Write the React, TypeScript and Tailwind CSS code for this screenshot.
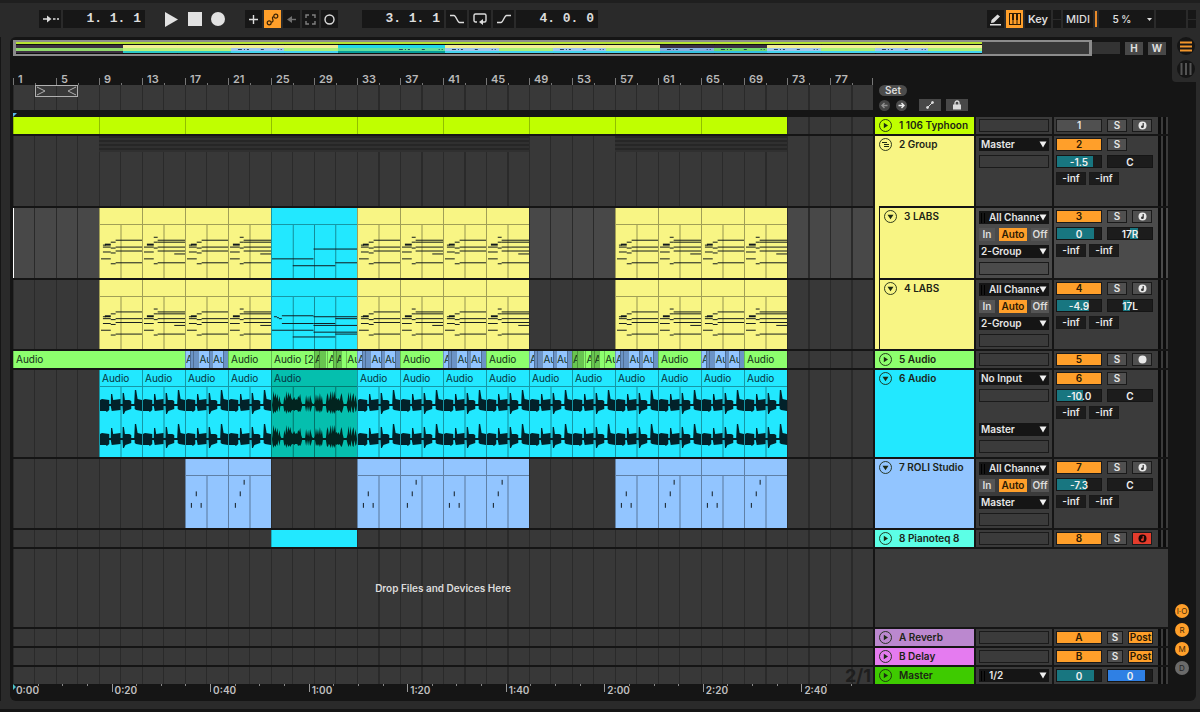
import React from 'react';
import clsx from 'clsx';

const TOTAL_BARS = 80;

type Note = [number, number, number, number?];

interface Clip {
  bars: number;
  color?: string;
  label?: string;
  kind?: 'plain' | 'midi' | 'wave' | 'burst' | 'name';
  notes?: Note[];
}

interface Track {
  name: string;
  num: string;
  height: string;
  color: string;
  lane?: string;
  panel?: string;
  clips: Clip[];
  icon: 'play' | 'fold' | 'group';
  child?: boolean;
  io: string[];
  active: boolean;
  arm?: 'midi' | 'audio' | 'armed';
  volume?: [string, number];
  pan?: [string, number, number];
  post?: boolean;
  master?: boolean;
}

// x, y, width, optional stroke height
const PHRASE_A: Note[] = [
  [5, 19, 6, 2], [3, 20, 3], [11, 17, 5], [16, 15, 27], [3, 22, 8], [11, 23, 5], [16, 22, 27], [3, 27, 8],
  [11, 28, 5], [16, 26, 27], [1, 34, 10], [11, 39, 5], [16, 38, 27],
];
const PHRASE_B: Note[] = [
  [4, 19, 7, 2], [11, 12, 4], [11, 17, 4], [15, 15, 28], [15, 17, 28], [1, 22, 10], [11, 23, 4], [15, 22, 28],
  [1, 27, 10], [15, 26, 28], [32, 29, 11], [1, 34, 10], [11, 39, 4], [15, 38, 28],
];
const BREAK_3: Note[] = [[0, 34, 42], [21, 41, 43], [42, 24, 44], [64, 38, 22]];
const BREAK_4: Note[] = [
  [2, 20, 3], [5, 21, 2], [7, 22, 3], [10, 19, 32], [42, 20, 44], [64, 22, 22], [10, 27, 32], [42, 27, 22],
  [42, 29, 44], [0, 34, 42], [42, 36, 44], [64, 38, 22], [21, 41, 43],
];
const HITS_A: Note[] = [[5, 28, 1, 5], [10, 16, 1, 5], [15, 28, 1, 5]];
const HITS_B: Note[] = [[6, 28, 1, 5], [11, 16, 1, 5], [15, 4, 1, 5]];

const YELLOW = 'bg-[#f8f584]';
const CYAN = 'bg-[#22e8ff]';
const GREEN = 'bg-[#8dff6e]';
const GREEN_DARK = 'bg-[#68c550]';
const BLUE = 'bg-[#92c5ff]';
const BLUE_DARK = 'bg-[#6b93c6]';

const gap = (bars: number): Clip => ({ bars });
const midi = (color: string, a: Note[], b: Note[]): Clip[] => [
  { bars: 4, color, kind: 'midi', notes: a },
  { bars: 4, color, kind: 'midi', notes: b },
];
const labs = (middle: Note[]): Clip[] => [
  gap(8),
  ...midi(YELLOW, PHRASE_A, PHRASE_B),
  ...midi(YELLOW, PHRASE_A, PHRASE_B),
  { bars: 8, color: CYAN, kind: 'midi', notes: middle },
  ...midi(YELLOW, PHRASE_A, PHRASE_B),
  ...midi(YELLOW, PHRASE_A, PHRASE_B),
  gap(8),
  ...midi(YELLOW, PHRASE_A, PHRASE_B),
  ...midi(YELLOW, PHRASE_A, PHRASE_B),
];

const name = (bars: number, color: string, label?: string): Clip => ({ bars, color, label, kind: 'name' });
const blueRun = [
  name(0.5, BLUE, 'A'), name(0.25, BLUE_DARK), name(0.5, BLUE_DARK), name(1, BLUE, 'Au'),
  name(0.25, BLUE_DARK), name(1, BLUE, 'Au'), name(0.5, BLUE_DARK),
];
const greenRun = [
  name(0.5, GREEN_DARK, 'A'), name(0.5, GREEN_DARK), name(0.25, GREEN), name(0.5, GREEN, 'A'),
  name(0.25, GREEN_DARK), name(0.5, GREEN_DARK, 'A'), name(0.5, GREEN), name(1, GREEN, 'Au'),
];
const green = name(4, GREEN, 'Audio');
const waves = (n: number): Clip[] =>
  Array.from({ length: n }, () => ({ bars: 4, color: CYAN, label: 'Audio', kind: 'wave' as const }));

const TRACKS: Track[] = [
  {
    name: '1 106 Typhoon', num: '1', height: 'h-[17px]', color: 'bg-[#c0ff00]', icon: 'play', io: ['empty'],
    active: false, arm: 'midi',
    clips: Array.from({ length: 9 }, () => ({ bars: 8, color: 'bg-[#c0ff00]', kind: 'plain' as const })),
  },
  {
    name: '2 Group', num: '2', height: 'h-[70px]', color: YELLOW, icon: 'group', io: ['Master', 'empty'],
    active: true, volume: ['-1.5', 82], pan: ['C', 50, 50],
    clips: [],
  },
  {
    name: '3 LABS', num: '3', height: 'h-[70px]', color: YELLOW, icon: 'fold', child: true,
    lane: 'bg-[#484848]', panel: 'bg-[#4b4b4b]', io: ['All Channels', 'monitor', '2-Group', 'empty'],
    active: true, arm: 'midi', volume: ['0', 84], pan: ['17R', 50, 69],
    clips: labs(BREAK_3),
  },
  {
    name: '4 LABS', num: '4', height: 'h-[69px]', color: YELLOW, icon: 'fold', child: true,
    io: ['All Channels', 'monitor', '2-Group', 'empty'],
    active: true, arm: 'midi', volume: ['-4.9', 72], pan: ['17L', 34, 50],
    clips: labs(BREAK_4),
  },
  {
    name: '5 Audio', num: '5', height: 'h-[17px]', color: GREEN, icon: 'play', io: ['empty'],
    active: true, arm: 'audio',
    clips: [
      name(16, GREEN, 'Audio'), ...blueRun, green, name(4, GREEN, 'Audio [2'), ...greenRun, ...blueRun, green,
      ...blueRun, green, ...blueRun, ...greenRun, ...blueRun, green, ...blueRun, green,
    ],
  },
  {
    name: '6 Audio', num: '6', height: 'h-[87px]', color: CYAN, icon: 'fold',
    io: ['No Input', 'empty', 'none', 'Master', 'empty'],
    active: true, volume: ['-10.0', 58], pan: ['C', 50, 50],
    clips: [gap(8), ...waves(4), { bars: 8, color: 'bg-[#05bfae]', label: 'Audio', kind: 'burst' }, ...waves(10)],
  },
  {
    name: '7 ROLI Studio', num: '7', height: 'h-[69px]', color: BLUE, icon: 'fold',
    io: ['All Channels', 'monitor', 'Master', 'empty'],
    active: true, arm: 'midi', volume: ['-7.3', 65], pan: ['C', 50, 50],
    clips: [
      gap(16), ...midi(BLUE, HITS_A, HITS_B), gap(8),
      ...midi(BLUE, HITS_A, HITS_B), ...midi(BLUE, HITS_A, HITS_B), gap(8),
      ...midi(BLUE, HITS_A, HITS_B), ...midi(BLUE, HITS_A, HITS_B),
    ],
  },
  {
    name: '8 Pianoteq 8', num: '8', height: 'h-[17px]', color: 'bg-[#5cffe6]', icon: 'play', io: ['empty'],
    active: true, arm: 'armed',
    clips: [gap(24), { bars: 8, color: CYAN, kind: 'plain' }],
  },
];

const RETURNS: Track[] = [
  {
    name: 'A Reverb', num: 'A', height: 'h-[17px]', color: 'bg-[#bb88cf]', icon: 'play', io: ['empty'],
    active: true, post: true, clips: [],
  },
  {
    name: 'B Delay', num: 'B', height: 'h-[17px]', color: 'bg-[#e57bf0]', icon: 'play', io: ['empty'],
    active: true, post: true, clips: [],
  },
  {
    name: 'Master', num: '', height: 'h-[17px]', color: 'bg-[#3ecb00]', icon: 'play', io: ['1/2'],
    active: true, master: true, clips: [],
  },
];

const GRID =
  'bg-[repeating-linear-gradient(to_right,#2a2a2a_0px,#2a2a2a_1px,transparent_1px,transparent_2.5%)]';

const WavePath: React.FC<{ c: number }> = ({ c }) => (
  <path
    fill="#02222a"
    d={`M0 ${c - 5}L2 ${c - 6}L9.5 ${c - 5}V${c - 1}H11L11.300 ${c - 11}H12.500L13.500 ${c - 5}L21 ${c - 6}V${c - 1}H23L23.200 ${c - 12}H24.500L25.500 ${c - 5}L30 ${c - 5}L32 ${c - 4}V${c - 1}H35L35.700 ${c - 15}H37L38.500 ${c - 6}L43 ${c - 5}V${c + 6}L37 ${c + 5}L35.500 ${c + 4}V${c + 1}H32V${c + 4}L26 ${c + 6}L24.500 ${c + 9}H23.500L23 ${c + 1}H21V${c + 5}L12 ${c + 6}L11 ${c + 1}H9.5V${c + 5}L7 ${c + 7}L6 ${c + 6}L0 ${c + 6}Z`}
  />
);

const BURST = [
  4, 14, 7, 12, 6, 11, 3, 9, 3, 1, 1, 1, 9, 4, 14, 6, 13, 8, 12, 7, 5, 6, 8, 5, 6, 5, 9, 7, 11, 4, 1, 1, 1, 1, 10, 3,
  9, 2, 10, 6, 2, 1, 1, 3, 11, 4, 10, 4, 12, 4, 9, 1, 1, 1, 1, 9, 12, 4, 8, 14, 5, 14, 7, 14, 6, 7, 5, 7, 4, 9, 12, 5,
  1, 1, 1, 1, 5, 13, 4, 13, 3, 9, 12, 3, 10, 4,
];

const burstPath = (c: number) => {
  const top = BURST.map((a, i) => `L${i + 0.5} ${c - a}`).join('');
  const bottom = BURST.map((a, i) => `L${i + 0.5} ${c + (a > 3 ? Math.round(a * 0.4) + 3 : 1)}`).reverse().join('');
  return `M0 ${c}${top}L86 ${c}${bottom}Z`;
};

const ClipBody: React.FC<{ clip: Clip }> = ({ clip }) => {
  const width = clip.bars * 10.75;
  const height = clip.kind === 'midi' ? 54 : 70;
  return (
    <svg viewBox={`0 0 ${width} ${height}`} preserveAspectRatio="none" className="block w-full h-full">
      {[2, 4, 6].filter((b) => b < clip.bars).map((b) => (
        <rect key={b} x={b * 10.75 - 0.5} y={0} width={1} height={height} fill="#000" opacity={0.4} />
      ))}
      {clip.notes?.map(([x, y, w, h = 1], i) => (
        <rect key={i} x={x} y={y} width={w} height={h} fill="#10181c" />
      ))}
      {clip.kind === 'wave' && <><WavePath c={18} /><WavePath c={52} /></>}
      {clip.kind === 'burst' && (
        <g fill="#02241f">
          <path d={burstPath(18)} />
          <path d={burstPath(52)} />
        </g>
      )}
    </svg>
  );
};

const ClipBox: React.FC<{ clip: Clip }> = ({ clip }) => {
  const style = { width: `${(clip.bars / TOTAL_BARS) * 100}%` };
  if (!clip.kind) return <div className="shrink-0" style={style} />;
  if (clip.kind === 'plain' || clip.kind === 'name') {
    return (
      <div
        style={style}
        className={clsx(
          'shrink-0 overflow-hidden whitespace-nowrap border-l border-black/25 leading-[17px] text-[#12301a]',
          clip.bars >= 4 && 'pl-0.5',
          clip.color,
        )}
      >
        {clip.label}
      </div>
    );
  }
  return (
    <div style={style} className={clsx('shrink-0 flex flex-col border-l border-black/35', clip.color)}>
      <div className="h-[17px] shrink-0 pl-0.5 leading-[17px] border-b border-black/35 text-[#063440]">
        {clip.label}
      </div>
      <div className="flex-1 min-h-0">
        <ClipBody clip={clip} />
      </div>
    </div>
  );
};

const TrackIcon: React.FC<{ kind: Track['icon'] }> = ({ kind }) => (
  <svg viewBox="0 0 13 13" className="w-[13px] h-[13px] shrink-0" fill="none" stroke="#1c2a14">
    <circle cx="6.5" cy="6.5" r="6" strokeWidth="0.9" />
    {kind === 'play' && <path d="M4.800 3.800v5.400l4.200-2.700z" fill="#1c2a14" stroke="none" />}
    {kind === 'fold' && <path d="M3.500 4.800h6l-3 4.400z" fill="#1c2a14" stroke="none" />}
    {kind === 'group' && <path d="M3 4.500h5M5 6.500h5M5 8.500h5" />}
  </svg>
);

const Select: React.FC<{ value: string; track: string }> = ({ value, track }) => {
  const wide = value === 'All Channels' || value === '1/2';
  return (
    <div className="relative h-[13px] bg-[#151515]">
      <select
        aria-label={`${track} routing`}
        className={clsx(
          'block w-full h-full appearance-none bg-transparent text-[#e6e6e6] font-semibold leading-[13px] pr-2.5',
          wide ? 'pl-2.5' : 'pl-0.5',
        )}
      >
        <option>{value}</option>
      </select>
      {wide && <span className="absolute left-0.5 top-0.5 w-1 h-2.5 border-x border-black" />}
      <svg viewBox="0 0 8 7" className="absolute right-0.5 top-[3px] w-2 h-[7px] pointer-events-none" fill="#f0f0f0">
        <path d="M0.500 0.500h7L4 6.500z" />
      </svg>
    </div>
  );
};

const IoRow: React.FC<{ item: string; track: string }> = ({ item, track }) => {
  if (item === 'empty') return <div className="h-[13px] border border-[#1a1a1a]" />;
  if (item === 'none') return <div className="h-[13px]" />;
  if (item === 'monitor') {
    return (
      <div className="flex gap-1 h-[13px] font-semibold leading-[13px]">
        <button className="w-4 bg-[#555] text-[#ddd]">In</button>
        <button className="flex-1 bg-[#ff9f2a] text-[#2b1a04]">Auto</button>
        <button className="w-[18px] bg-[#555] text-[#ddd]">Off</button>
      </div>
    );
  }
  return <Select value={item} track={track} />;
};

const ValueBox: React.FC<{ label: string; value: string; from: number; to: number; fill: string }> = ({
  label, value, from, to, fill,
}) => (
  <input
    aria-label={label}
    defaultValue={value}
    className="w-[46px] h-[13px] border border-[#151515] text-center text-[#f0f0f0] font-semibold leading-[11px]"
    style={{
      background: `linear-gradient(to right, #1c1c1c ${from}%, ${fill} ${from}%, ${fill} ${to}%, #1c1c1c ${to}%)`,
    }}
  />
);

const ArmIcon: React.FC<{ arm: NonNullable<Track['arm']> }> = ({ arm }) => (
  <svg viewBox="0 0 9 9" className="w-[9px] h-[9px]">
    <circle cx="4.5" cy="4.5" r="4" fill={arm === 'armed' ? '#1a0805' : '#e8e8e8'} />
    {arm !== 'audio' && (
      <path
        d="M4.600 2h1.200v3.800a1.400 1.200 0 1 1-1.200-1.200z"
        fill={arm === 'armed' ? '#e43c2c' : '#333'}
      />
    )}
  </svg>
);

const Mixer: React.FC<{ track: Track }> = ({ track }) => {
  const box = 'h-[13px] border border-[#1a1a1a] leading-[11px] font-semibold flex items-center justify-center';
  return (
    <div className={clsx('w-[114px] flex justify-between px-0.5', track.panel ?? 'bg-[#3b3b3b]')}>
      <div className="w-[97px] pt-0.5 flex flex-col gap-1">
        {track.master ? (
          <div className="flex gap-[5px]">
            <ValueBox label="Master volume" value="0" from={0} to={84} fill="#187680" />
            <ValueBox label="Cue volume" value="0" from={0} to={84} fill="#2f80e4" />
          </div>
        ) : (
          <div className="flex gap-[5px]">
            <button className={clsx(box, 'w-[46px]', track.active ? 'bg-[#ff9f2a] text-[#2b1a04]' : 'bg-[#505050] text-[#e6e6e6]')}>
              {track.num}
            </button>
            <button className={clsx(box, 'bg-[#505050] text-[#e6e6e6]', track.post ? 'w-4' : 'w-5')}>S</button>
            {track.post && <button className={clsx(box, 'w-[25px] bg-[#ff9f2a] text-[#2b1a04]')}>Post</button>}
            {track.arm && (
              <button
                aria-label={`Arm ${track.name}`}
                className={clsx(box, 'w-5', track.arm === 'armed' ? 'bg-[#e43c2c]' : 'bg-[#505050]')}
              >
                <ArmIcon arm={track.arm} />
              </button>
            )}
          </div>
        )}
        {track.volume && track.pan && (
          <>
            <div className="flex gap-[5px]">
              <ValueBox label={`${track.name} volume`} value={track.volume[0]} from={0} to={track.volume[1]} fill="#187680" />
              <ValueBox label={`${track.name} pan`} value={track.pan[0]} from={track.pan[1]} to={track.pan[2]} fill="#187680" />
            </div>
            <div className="flex gap-[3px]">
              <div className={clsx(box, 'w-[30px] bg-[#1c1c1c] text-[#e6e6e6]')}>-inf</div>
              <div className={clsx(box, 'w-[30px] bg-[#1c1c1c] text-[#e6e6e6]')}>-inf</div>
            </div>
          </>
        )}
      </div>
      <div className="flex gap-0.5">
        <div className="w-[3px] bg-[#0c0c0c]" />
        <div className="w-[3px] bg-[#0c0c0c]" />
      </div>
    </div>
  );
};

const TrackRow: React.FC<{ track: Track }> = ({ track }) => (
  <div className={clsx('flex gap-0.5', track.height)}>
    <div className={clsx('flex-1 min-w-0 flex', GRID, track.lane ?? 'bg-[#383838]', track.lane && 'shadow-[inset_1px_0_0_#fff]')}>
      {track.clips.map((clip, i) => (
        <ClipBox key={i} clip={clip} />
      ))}
      {track.icon === 'group' && (
        <>
          <div className="w-[10%]" />
          <div className="w-1/2 h-4 bg-[repeating-linear-gradient(to_bottom,#262626_0px,#262626_2px,#303030_2px,#303030_4px)]" />
          <div className="w-[10%]" />
          <div className="w-1/5 h-4 bg-[repeating-linear-gradient(to_bottom,#262626_0px,#262626_2px,#303030_2px,#303030_4px)]" />
        </>
      )}
      {track.master && (
        <div className="ml-auto pr-0.5 text-lg leading-[17px] font-bold text-[#1e1e1e]">2/1</div>
      )}
    </div>
    <div className="w-[99px] flex">
      {track.child && (
        <div className={clsx('w-1 mr-px shadow-[0_-2px_0_#f8f584]', track.color)} />
      )}
      <div className={clsx('flex-1 min-w-0 flex items-start gap-[7px] pl-1 pt-0.5', track.color)}>
        <TrackIcon kind={track.icon} />
        <span className="leading-[13px] font-semibold text-[#1c2416] whitespace-nowrap">{track.name}</span>
      </div>
    </div>
    <div
      className={clsx(
        'w-[76px] px-[3px] flex flex-col gap-1',
        track.io.includes('monitor') ? 'pt-[3px]' : 'pt-0.5',
        track.panel ?? 'bg-[#3b3b3b]',
      )}
    >
      {track.io.map((item, i) => (
        <IoRow key={i} item={item} track={track.name} />
      ))}
    </div>
    <Mixer track={track} />
  </div>
);

// top, middle and bottom stripe of each 4-bar block
const OVERVIEW: [string, string, string, boolean][] = [
  ['bg-[#3c3040]', 'bg-[#8fd76c]', 'bg-[#3c3040]', false],
  ['bg-[#3c3040]', 'bg-[#8fd76c]', 'bg-[#3c3040]', false],
  ['bg-[#f2ee94]', 'bg-[#b9f07c]', 'bg-[#2cc9c6]', false],
  ['bg-[#f2ee94]', 'bg-[#b9f07c]', 'bg-[#2cc9c6]', false],
  ['bg-[#f2ee94]', 'bg-[#9fc8f0]', 'bg-[#45d4f0]', true],
  ['bg-[#f2ee94]', 'bg-[#a8f07c]', 'bg-[#45d4f0]', false],
  ['bg-[#22d8e8]', 'bg-[#5fe0a0]', 'bg-[#079c98]', false],
  ['bg-[#22d8e8]', 'bg-[#5fe0a0]', 'bg-[#079c98]', true],
  ['bg-[#f2ee94]', 'bg-[#9fc8f0]', 'bg-[#45d4f0]', true],
  ['bg-[#f2ee94]', 'bg-[#a8f07c]', 'bg-[#45d4f0]', false],
  ['bg-[#f2ee94]', 'bg-[#9fc8f0]', 'bg-[#45d4f0]', true],
  ['bg-[#f2ee94]', 'bg-[#a8f07c]', 'bg-[#45d4f0]', false],
  ['bg-[#3c3040]', 'bg-[#86b0e0]', 'bg-[#35c0e0]', true],
  ['bg-[#3c3040]', 'bg-[#70d870]', 'bg-[#35c0e0]', true],
  ['bg-[#f2ee94]', 'bg-[#9fc8f0]', 'bg-[#45d4f0]', true],
  ['bg-[#f2ee94]', 'bg-[#a8f07c]', 'bg-[#45d4f0]', false],
  ['bg-[#f2ee94]', 'bg-[#9fc8f0]', 'bg-[#45d4f0]', true],
  ['bg-[#f2ee94]', 'bg-[#a8f07c]', 'bg-[#45d4f0]', false],
];

const Overview = () => (
  <div className="flex items-center gap-[5px] h-4 pr-1.5">
    <div className="flex-1 flex items-center h-4">
      <div className="w-[97.5%] h-4 flex border-2 border-x-[3px] border-[#8c8c8c] bg-[#383838]">
        <div className="w-[90%] flex bg-[#101010]">
          {OVERVIEW.map(([top, mid, bottom, busy], i) => (
            <div
              key={i}
              className={clsx('flex-1 flex flex-col', i > 1 && i !== 7 && 'shadow-[inset_1px_0_0_rgba(0,0,0,0.5)]')}
            >
              <div className="h-0.5 bg-[#b6e332]" />
              <div className="h-px" />
              <div className={clsx('h-[3px]', top)} />
              <div className={clsx('h-[3px]', mid)}>
                {busy && (
                  <svg viewBox="0 0 54 3" preserveAspectRatio="none" className="block w-full h-full" stroke="#26405c">
                    <path d="M7 1.500h4m2 0h1m2 0h2M30 1.500h3M47 1.500h1m2 0h1" />
                  </svg>
                )}
              </div>
              <div className={clsx('h-0.5', bottom)} />
            </div>
          ))}
        </div>
      </div>
      <div className="flex-1 h-3 bg-[#333]" />
    </div>
    <button className="w-[18px] h-[13px] bg-[#484848] text-[#ddd] font-bold leading-[13px]">H</button>
    <button className="w-[18px] h-[13px] bg-[#484848] text-[#ddd] font-bold leading-[13px]">W</button>
  </div>
);

const BarRuler = () => (
  <div className="flex-1 min-w-0 flex flex-col">
    <div className="h-[29px] flex items-end">
      {Array.from({ length: 20 }, (_, i) => (
        <div key={i} className="w-1/20 flex items-end">
          <div className="w-1/2 flex items-end gap-1">
            <span className="w-px h-[7px] bg-[#777] shrink-0" />
            <span className="text-[11px] text-[#b8b8b8] font-semibold leading-3">{i * 4 + 1}</span>
          </div>
          <span className="w-px h-0.5 bg-[#777]" />
          {i === 19 && <span className="ml-auto w-px h-[7px] bg-[#777]" />}
        </div>
      ))}
    </div>
    <div className={clsx('h-[25px] bg-[#393939] flex', GRID)}>
      <div className="w-[2.5%]" />
      <div className="w-[5%] h-3 flex justify-between items-center border border-[#b0b0b0]">
        <svg viewBox="0 0 10 10" className="w-2.5 h-2.5" fill="none" stroke="#b0b0b0">
          <path d="M1 1l8 4-8 4" />
        </svg>
        <svg viewBox="0 0 10 10" className="w-2.5 h-2.5" fill="none" stroke="#b0b0b0">
          <path d="M9 1L1 5l8 4" />
        </svg>
      </div>
    </div>
    <div className="h-[7px] flex items-end">
      <svg viewBox="0 0 4 4" className="w-1 h-1" fill="#58b8e8"><path d="M0 0h4L0 4z" /></svg>
    </div>
  </div>
);

const SetControls = () => (
  <div className="w-[295px] pl-1.5 pt-[29px]">
    <button className="block w-7 h-[11px] rounded-full bg-[#4c4c4c] text-[#ddd] font-semibold leading-[11px]">Set</button>
    <div className="flex items-center mt-[3px] h-3">
      <button aria-label="Previous locator" className="w-[11px] h-[11px] rounded-full bg-[#444] text-[#909090] mr-1.5">
        <svg viewBox="0 0 11 11" fill="none" stroke="currentColor" strokeWidth="1.400"><path d="M8.500 5.500H3M5.500 3L3 5.500 5.500 8" /></svg>
      </button>
      <button aria-label="Next locator" className="w-[11px] h-[11px] rounded-full bg-[#4c4c4c] text-[#eee] mr-3">
        <svg viewBox="0 0 11 11" fill="none" stroke="currentColor" strokeWidth="1.400"><path d="M2.500 5.500H8M5.500 3L8 5.500 5.500 8" /></svg>
      </button>
      <button aria-label="Automation mode" className="w-[22px] h-3 bg-[#484848] flex items-center justify-center mr-[5px]">
        <svg viewBox="0 0 10 10" className="w-2.5 h-2.5" stroke="#ddd" fill="#ddd"><path d="M3 7l4-4" /><circle cx="2.500" cy="7.500" r="1" /><circle cx="7.500" cy="2.500" r="1" /></svg>
      </button>
      <button aria-label="Lock envelopes" className="w-[22px] h-3 bg-[#484848] flex items-center justify-center">
        <svg viewBox="0 0 10 10" className="w-2.5 h-2.5" fill="#ddd"><path d="M1 4.500h8v5H1z" /><path d="M3 5V3a2 2 0 0 1 4 0v2" fill="none" stroke="#ddd" strokeWidth="1.300" /></svg>
      </button>
    </div>
  </div>
);

const TimeRuler = () => (
  <div className="flex h-[17px] pr-[299px]">
    <div className="flex-1 min-w-0 flex overflow-hidden">
      {['0:00', '0:20', '0:40', '1:00', '1:20', '1:40', '2:00', '2:20', '2:40'].map((t, i) => (
        <div key={t} className="w-[11.46%] shrink-0 flex items-start">
          <div className="w-1/4 flex gap-0.5">
            {i === 0 ? (
              <svg viewBox="0 0 3 6" className="w-[3px] h-1.5 shrink-0 -mr-0.5" fill="#4fc3c8"><path d="M0 0l3 3-3 3z" /></svg>
            ) : (
              <span className="w-px h-2 bg-[#999] shrink-0" />
            )}
            <span className="text-[#c0c0c0] font-semibold leading-[13px]">{t}</span>
          </div>
          {[1, 2, 3].map((q) => (
            <div key={q} className="w-1/4 h-0.5 border-l border-[#888]" />
          ))}
        </div>
      ))}
    </div>
  </div>
);

const Cell: React.FC<{ label: string; className?: string; children?: React.ReactNode }> = ({ label, className, children }) => (
  <button aria-label={label} className={clsx('h-[18px] bg-[#171717] text-[#ddd] flex items-center justify-center', className ?? 'w-[17px]')}>
    {children}
  </button>
);

const Position: React.FC<{ label: string; value: string }> = ({ label, value }) => (
  <input
    aria-label={label}
    defaultValue={value}
    className="w-[82px] h-[18px] pr-1 bg-[#171717] text-right text-[#ddd] text-[13px] font-bold font-['Liberation_Mono',monospace]"
  />
);

const line = { fill: 'none', stroke: 'currentColor', strokeWidth: 1.4 };

const Transport = () => (
  <header className="flex items-center h-[37px] pl-[39px] pr-1 pb-0.5 border-t-[3px] border-[#1f1f1f]">
    <div className="flex gap-0.5">
      <Cell label="Follow" className="w-[22px]">
        <svg viewBox="0 0 17 10" className="w-[17px] h-2.5" {...line}><path d="M1 5h6M11 5h2.500M15 5h2" /><path d="M5 1.500L9.500 5 5 8.500z" fill="currentColor" stroke="none" /></svg>
      </Cell>
      <Position label="Arrangement position" value="1. 1. 1" />
    </div>
    <div className="flex items-center gap-[9px] ml-[19px] text-[#e2e2e2]">
      <button aria-label="Play"><svg viewBox="0 0 15 15" className="w-[15px] h-[15px]" fill="currentColor"><path d="M1 0l13 7.500L1 15z" /></svg></button>
      <button aria-label="Stop"><svg viewBox="0 0 14 14" className="w-3.5 h-3.5" fill="currentColor"><path d="M0 0h14v14H0z" /></svg></button>
      <button aria-label="Record"><svg viewBox="0 0 14 14" className="w-3.5 h-3.5" fill="currentColor"><circle cx="7" cy="7" r="7" /></svg></button>
    </div>
    <div className="flex gap-0.5 ml-5">
      <Cell label="MIDI overdub"><svg viewBox="0 0 11 11" className="w-[11px] h-[11px]" {...line}><path d="M5.500 1v9M1 5.500h9" /></svg></Cell>
      <Cell label="Automation arm" className="w-[17px] !bg-[#ff9f2a] !text-[#3a2204]">
        <svg viewBox="0 0 13 13" className="w-[13px] h-[13px]" {...line} strokeWidth={1.2}><circle cx="3.200" cy="9.800" r="2" /><circle cx="9.800" cy="3.200" r="2" /><path d="M5.200 9.200c2 0 2-1.700 1.600-2.700S6 3.500 7.800 3.800" /></svg>
      </Cell>
      <Cell label="Re-enable automation"><svg viewBox="0 0 11 11" className="w-[11px] h-[11px] text-[#707070]" {...line}><path d="M4 5.500h6" /><path d="M6 2L1 5.500 6 9z" fill="currentColor" stroke="none" /></svg></Cell>
      <Cell label="Capture MIDI"><svg viewBox="0 0 11 11" className="w-[11px] h-[11px] text-[#808080]" {...line}><path d="M1 4V1h3M7 1h3v3M10 7v3H7M4 10H1V7" /></svg></Cell>
      <Cell label="Session record"><svg viewBox="0 0 11 11" className="w-[11px] h-[11px]" {...line}><circle cx="5.500" cy="5.500" r="4.500" /></svg></Cell>
    </div>
    <div className="flex gap-0.5 ml-6">
      <Position label="Loop start" value="3. 1. 1" />
      <Cell label="Punch in" className="w-[21px]"><svg viewBox="0 0 14 10" className="w-3.5 h-2.5" {...line}><path d="M0 1.500h4c2 0 3.500 7 5.500 7H14" /></svg></Cell>
      <Cell label="Loop" className="w-[22px]"><svg viewBox="0 0 14 12" className="w-3.5 h-3" {...line}><path d="M4 9H2.500A1.500 1.500 0 0 1 1 7.500v-5A1.500 1.500 0 0 1 2.500 1h9A1.500 1.500 0 0 1 13 2.500v5A1.500 1.500 0 0 1 11.500 9H8" /><path d="M10 6v6L6 9z" fill="currentColor" stroke="none" /></svg></Cell>
      <Cell label="Punch out" className="w-[21px]"><svg viewBox="0 0 14 10" className="w-3.5 h-2.5" {...line}><path d="M0 8.500h4c2 0 3.500-7 5.500-7H14" /></svg></Cell>
      <Position label="Loop length" value="4. 0. 0" />
    </div>
    <div className="flex gap-0.5 ml-auto">
      <Cell label="Draw mode"><svg viewBox="0 0 13 13" className="w-[13px] h-[13px]" fill="currentColor"><path d="M2 10l.5-3L8.500 1.500l2.500 2L5 9.500zM1 11h11v1.500H1z" /></svg></Cell>
      <Cell label="Computer MIDI keyboard" className="w-[17px] !bg-[#ff9f2a] !text-[#2b1a04]"><svg viewBox="0 0 12 12" className="w-3 h-3" fill="currentColor"><path d="M0 0h1v12H0zM11 0h1v12h-1zM0 0h12v1H0zM0 11h12v1H0zM3 1h2v6H3zM7 1h2v6H7zM3.500 7h1v4h-1zM7.500 7h1v4h-1z" /></svg></Cell>
      <Cell label="Key map" className="w-[26px] text-[11px] font-semibold">Key</Cell>
      <div className="w-2 flex flex-col gap-px"><span className="flex-1 bg-[#171717]" /><span className="flex-1 bg-[#171717]" /></div>
      <Cell label="MIDI map" className="w-[30px] text-[11px] font-medium">MIDI</Cell>
      <span className="w-0.5 bg-[#e88a2a] my-px" />
      <Cell label="CPU load" className="w-[55px] font-semibold gap-4 pl-3"><span>5 %</span><svg viewBox="0 0 5 3" className="w-[5px] h-[3px]" fill="currentColor"><path d="M0 0h5L2.500 3z" /></svg></Cell>
      <div className="w-[30px] bg-[#171717]" />
      <div className="w-2 flex flex-col gap-px"><span className="flex-1 bg-[#171717]" /><span className="flex-1 bg-[#171717]" /></div>
    </div>
  </header>
);

const Sidebar = () => (
  <div className="w-6 flex flex-col">
    <div className="h-[45px] bg-[#2a2a2a] rounded-bl flex flex-col items-center gap-[5px] pl-1">
      <button aria-label="Arrangement view" className="w-[18px] h-[18px] rounded-full bg-[#151515] flex items-center justify-center">
        <svg viewBox="0 0 12 11" className="w-3 h-[11px]" stroke="#f2962c" strokeWidth="2"><path d="M0 1.500h12M0 5.500h12M0 9.500h12" /></svg>
      </button>
      <button aria-label="Session view" className="w-[18px] h-[18px] rounded-full bg-[#151515] flex items-center justify-center">
        <svg viewBox="0 0 12 12" className="w-3 h-3" stroke="#555" strokeWidth="2"><path d="M1.500 0v12M6 0v12M10.500 0v12" /></svg>
      </button>
    </div>
    <div className="mt-auto mb-[26px] flex flex-col gap-[5px] pl-[3px] text-[8px] leading-[14px] text-center">
      {['I·O', 'R', 'M', 'D'].map((t) => (
        <button key={t} className={clsx('w-3.5 h-3.5 rounded-full', t === 'D' ? 'bg-[#6a6a6a] text-[#222]' : 'bg-[#ff9f2a] text-[#4a2c06]')}>
          {t}
        </button>
      ))}
    </div>
  </div>
);

export default function App() {
  return (
    <div className="min-h-screen flex flex-col bg-[#2a2a2a] text-[10px] font-['Inter','Liberation_Sans',sans-serif] select-none">
      <Transport />
      <div className="flex">
        <div className="w-2.5 border-l border-[#151515]" />
        <main className="flex-1 min-w-0 flex bg-[#151515] rounded-md">
          <div className="flex-1 min-w-0 flex flex-col pl-[3px] pt-[3px]">
            <Overview />
            <div className="flex pr-1">
              <BarRuler />
              <SetControls />
            </div>
            <div className="flex flex-col gap-0.5 pr-1">
              {TRACKS.map((track) => (
                <TrackRow key={track.name} track={track} />
              ))}
              <div className="flex gap-0.5 h-[78px]">
                <div className={clsx('flex-1 flex items-center justify-center bg-[#383838] text-[#dcdcdc] font-semibold', GRID)}>
                  Drop Files and Devices Here
                </div>
                <div className="w-[293px] bg-[#3b3b3b]" />
              </div>
              {RETURNS.map((track) => (
                <TrackRow key={track.name} track={track} />
              ))}
            </div>
            <TimeRuler />
          </div>
          <Sidebar />
        </main>
        <div className="w-1" />
      </div>
      <div className="mt-2 flex-1 bg-[#151515]" />
    </div>
  );
}
